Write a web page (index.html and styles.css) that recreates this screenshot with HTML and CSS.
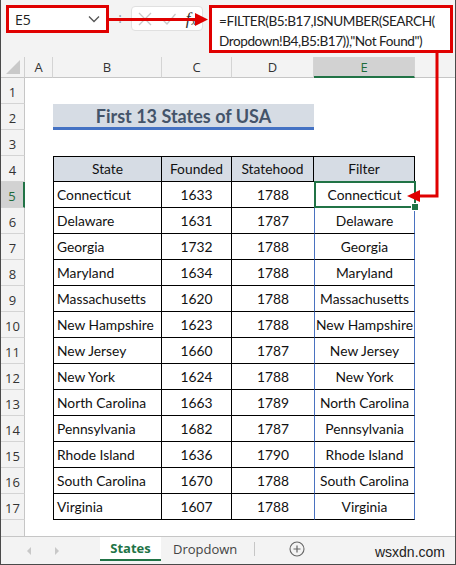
FILE: index.html
```html
<!DOCTYPE html>
<html>
<head>
<meta charset="utf-8">
<link rel="stylesheet" href="styles.css">
</head>
<body>
<div class="app">
  <div class="fbar">
    <div class="namebox"><span class="nb-text">E5</span>
      <svg class="chev" width="12" height="8" viewBox="0 0 12 8"><path d="M1 1.5 L6 6.5 L11 1.5" fill="none" stroke="#555" stroke-width="1.3"/></svg>
    </div>
    <div class="colon">:</div>
    <div class="fbtns">
      <svg width="16" height="16" viewBox="0 0 16 16"><path d="M2 2 L14 14 M14 2 L2 14" stroke="#c8c8c8" stroke-width="1.3" fill="none"/></svg>
      <svg width="16" height="16" viewBox="0 0 16 16"><path d="M1.5 8.5 L6 13 L14.5 3" stroke="#c8c8c8" stroke-width="1.3" fill="none"/></svg>
      <span class="fx">f<span class="fxx">x</span></span>
    </div>
    <div class="formula">=FILTER(B5:B17,ISNUMBER(SEARCH(<br>Dropdown!B4,B5:B17)),"Not Found")</div>
  </div>

  <div class="sheet">
    <div class="corner"><svg width="14" height="14" viewBox="0 0 14 14"><path d="M14 0 L14 14 L0 14 Z" fill="#c9c9c9"/></svg></div>
    <div class="ch">A</div><div class="ch">B</div><div class="ch">C</div><div class="ch">D</div><div class="ch ch-sel">E</div><div class="ch ch-rest"></div>

    <div class="rh">1</div><div></div><div></div><div></div><div></div><div></div><div></div>
    <div class="rh">2</div><div></div><div class="title">First 13 States of USA</div><div></div><div></div>
    <div class="rh">3</div><div></div><div></div><div></div><div></div><div></div><div></div>

    <div class="rh">4</div><div></div><div class="c hd first">State</div><div class="c hd">Founded</div><div class="c hd">Statehood</div><div class="c hd e-hd">Filter</div><div></div>
    <div class="rh rh-sel">5</div><div></div><div class="c first left">Connecticut</div><div class="c">1633</div><div class="c d">1788</div><div class="c e sel">Connecticut</div><div></div>
    <div class="rh">6</div><div></div><div class="c first left">Delaware</div><div class="c">1631</div><div class="c d">1787</div><div class="c e">Delaware</div><div></div>
    <div class="rh">7</div><div></div><div class="c first left">Georgia</div><div class="c">1732</div><div class="c d">1788</div><div class="c e">Georgia</div><div></div>
    <div class="rh">8</div><div></div><div class="c first left">Maryland</div><div class="c">1634</div><div class="c d">1788</div><div class="c e">Maryland</div><div></div>
    <div class="rh">9</div><div></div><div class="c first left">Massachusetts</div><div class="c">1620</div><div class="c d">1788</div><div class="c e">Massachusetts</div><div></div>
    <div class="rh">10</div><div></div><div class="c first left">New Hampshire</div><div class="c">1623</div><div class="c d">1788</div><div class="c e">New Hampshire</div><div></div>
    <div class="rh">11</div><div></div><div class="c first left">New Jersey</div><div class="c">1660</div><div class="c d">1787</div><div class="c e">New Jersey</div><div></div>
    <div class="rh">12</div><div></div><div class="c first left">New York</div><div class="c">1624</div><div class="c d">1788</div><div class="c e">New York</div><div></div>
    <div class="rh">13</div><div></div><div class="c first left">North Carolina</div><div class="c">1663</div><div class="c d">1789</div><div class="c e">North Carolina</div><div></div>
    <div class="rh">14</div><div></div><div class="c first left">Pennsylvania</div><div class="c">1682</div><div class="c d">1787</div><div class="c e">Pennsylvania</div><div></div>
    <div class="rh">15</div><div></div><div class="c first left">Rhode Island</div><div class="c">1636</div><div class="c d">1790</div><div class="c e">Rhode Island</div><div></div>
    <div class="rh">16</div><div></div><div class="c first left">South Carolina</div><div class="c">1670</div><div class="c d">1788</div><div class="c e">South Carolina</div><div></div>
    <div class="rh">17</div><div></div><div class="c first left">Virginia</div><div class="c">1607</div><div class="c d">1788</div><div class="c e">Virginia</div><div></div>
    <div class="rh rh-fill"></div><div class="fill"></div>
  </div>

  <div class="tabbar">
    <div class="navs">
      <svg width="8" height="10" viewBox="0 0 8 10"><path d="M6 1 L2 5 L6 9 Z" fill="#c8c8c8"/></svg>
      <svg width="8" height="10" viewBox="0 0 8 10"><path d="M2 1 L6 5 L2 9 Z" fill="#c8c8c8"/></svg>
    </div>
    <div class="tab active">States</div>
    <div class="tab">Dropdown</div>
    <div class="tsep"></div>
    <div class="addtab"><svg width="16" height="16" viewBox="0 0 16 16"><circle cx="8" cy="8" r="7" fill="none" stroke="#666" stroke-width="1.1"/><path d="M8 4.5 V11.5 M4.5 8 H11.5" stroke="#666" stroke-width="1.2"/></svg></div>
    <div class="brand">wsxdn.com</div>
  </div>

  <svg class="annot" width="456" height="565" viewBox="0 0 456 565">
    <path d="M108 19.5 H197" stroke="#e00000" stroke-width="3" fill="none"/>
    <path d="M195 13 L208 19.5 L195 26 Z" fill="#e00000"/>
    <path d="M437 52 V196 H418" stroke="#e00000" stroke-width="3" fill="none"/>
    <path d="M420 190 L407 196 L420 202 Z" fill="#e00000"/>
  </svg>
</div>
</body>
</html>
```

FILE: styles.css
```css
* { box-sizing: border-box; }
html, body { margin: 0; padding: 0; }
body { width: 456px; height: 565px; overflow: hidden; background: #fff; font-family: "Lato", "Open Sans", sans-serif; }

.app {
  position: relative;
  width: 456px;
  height: 565px;
  display: flex;
  flex-direction: column;
  border-left: 1px solid #4a4a4a;
  border-right: 1px solid #4a4a4a;
  border-bottom: 1px solid #4a4a4a;
}

/* formula bar */
.fbar {
  height: 57px;
  background: #f3f3f3;
  display: flex;
  align-items: flex-start;
  padding-top: 5px;
  flex-shrink: 0;
}
.namebox {
  margin-left: 5px;
  width: 103px;
  height: 28px;
  border: 3px solid #e00000;
  background: #fff;
  display: flex;
  align-items: center;
  justify-content: space-between;
  padding: 0 6px 0 6px;
}
.nb-text { font-family: "Open Sans", sans-serif; font-size: 14px; color: #222; }
.colon { width: 22px; text-align: center; font-family: "Open Sans", sans-serif; font-size: 14px; color: #9a9a9a; line-height: 26px; }
.fbtns {
  width: 72px;
  height: 25px;
  margin-top: 1px;
  border: 1px solid #e0e0e0;
  border-radius: 4px;
  background: #fff;
  display: flex;
  align-items: center;
  justify-content: space-between;
  padding: 0 6px 0 5px;
}
.fx { font-family: "Liberation Serif", serif; font-style: italic; font-size: 17px; color: #333; line-height: 1; display: flex; align-items: flex-end; }
.fxx { font-size: 10px; margin-left: 1px; }
.formula {
  margin-left: 6px;
  width: 244px;
  height: 48px;
  border: 3px solid #e00000;
  background: #fff;
  padding: 3px 0 0 7px;
  font-size: 13.6px;
  letter-spacing: -0.45px;
  line-height: 20px;
  color: #222;
  white-space: nowrap;
}

/* sheet grid */
.sheet {
  flex: 1;
  display: grid;
  grid-template-columns: 24px 28px 109px 70px 82px 101px 1fr;
  grid-template-rows: 21px repeat(17, 26px) 1fr;
  font-size: 13.8px;
  color: #111;
}
.corner { background: #f3f3f3; border-right: 1px solid #d0d0d0; border-bottom: 1px solid #c6c6c6; display: flex; align-items: flex-end; justify-content: flex-end; padding: 0 4px 3px 0; }
.ch {
  background: #f3f3f3;
  border-right: 1px solid #d4d4d4;
  border-bottom: 1px solid #c6c6c6;
  display: flex; align-items: center; justify-content: center;
  font-family: "Open Sans", sans-serif; font-size: 13px; color: #333;
}
.ch-sel { background: #d2d2d2; color: #1e6b3c; border-bottom: 2px solid #217346; }
.ch-rest { border-right: none; }
.rh {
  background: #f3f3f3;
  border-right: 1px solid #c6c6c6;
  border-bottom: 1px solid #d4d4d4;
  display: flex; align-items: flex-end; justify-content: center;
  padding-bottom: 2px;
  font-family: "Open Sans", sans-serif; font-size: 13px; color: #333;
}
.rh-sel { background: #d2d2d2; color: #1e6b3c; border-right: 2px solid #217346; }
.rh-fill { border-bottom: none; }
.fill { grid-column: 2 / -1; }

.title {
  grid-column: span 3;
  background: #d6dce4;
  border-bottom: 3px solid #4472c4;
  display: flex; align-items: center; justify-content: center;
  font-weight: 700; font-size: 18px; color: #44546a;
  padding-top: 1px;
}

.c {
  border-right: 1px solid #000;
  border-bottom: 1px solid #000;
  display: flex; align-items: flex-end; justify-content: center;
  padding-bottom: 4px;
  white-space: nowrap;
}
.c.first { border-left: 1px solid #000; }
.c.left { justify-content: flex-start; padding-left: 3px; }
.c.hd { background: #d6dce4; border-top: 1px solid #000; }
.c.d { border-right: none; }
.c.e { border-left: 1px solid #4a72c0; border-right: 1px solid #4a72c0; }
.c.e-hd { border-left: none; }
.sel { position: relative; }
.sel::after {
  content: "";
  position: absolute;
  left: -1px; top: -1px; right: -2px; bottom: -1px;
  border: 2px solid #217346;
}
.sel::before {
  content: "";
  position: absolute;
  right: -5px; bottom: -4px;
  width: 6px; height: 6px;
  background: #217346;
  border: 1px solid #fff;
  z-index: 2;
}

/* tab bar */
.tabbar {
  height: 28px;
  flex-shrink: 0;
  background: #f3f3f3;
  border-top: 1px solid #c6c6c6;
  display: flex;
  align-items: stretch;
  font-family: "Open Sans", sans-serif;
}
.navs { width: 99px; display: flex; align-items: center; gap: 20px; padding-left: 24px; }
.tab { display: flex; align-items: center; justify-content: center; font-size: 13px; color: #444; padding: 0 12px; margin-bottom: 3px; }
.tab.active { width: 61px; background: #fff; color: #217346; font-weight: 700; border-bottom: 2px solid #217346; }
.tsep { width: 1px; background: #c6c6c6; margin: 5px 0 8px 5px; }
.addtab { width: 84px; display: flex; align-items: center; justify-content: center; padding-bottom: 3px; }
.brand { margin-left: auto; padding-right: 10px; display: flex; align-items: center; font-family: "Liberation Sans", sans-serif; font-size: 14px; color: #222; padding-top: 3px; }

.annot { position: absolute; left: -1px; top: 0; pointer-events: none; }
```
